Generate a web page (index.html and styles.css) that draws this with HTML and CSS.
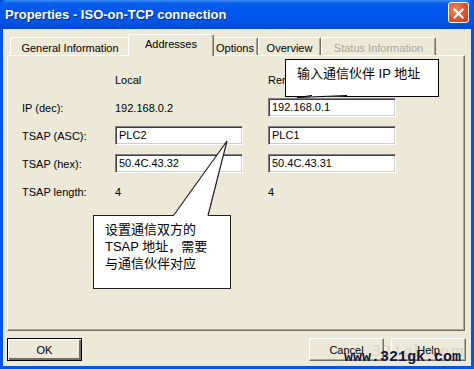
FILE: index.html
```html
<!DOCTYPE html>
<html lang="zh-CN">
<head>
    <meta charset="UTF-8">
    <title>Properties - ISO-on-TCP connection</title>
    <link rel="stylesheet" href="styles.css">
</head>
<body>
    <div class="window">
        <div class="titlebar">
            <span class="title">Properties - ISO-on-TCP connection</span>
            <span class="close">
                <svg width="21" height="21" viewBox="0 0 21 21">
                    <path d="M6 6 L15 15 M15 6 L6 15" stroke="#fff" stroke-width="2.2" stroke-linecap="square"/>
                </svg>
            </span>
        </div>

        <div class="body">
            <!-- Tabs -->
            <div class="tabs">
                <div class="tab tab-general">General Information</div>
                <div class="tab tab-addr selected">Addresses</div>
                <div class="tab tab-options">Options</div>
                <div class="tab tab-overview">Overview</div>
                <div class="tab tab-status disabled">Status Information</div>
            </div>

            <!-- Addresses page -->
            <div class="panel">
                <div class="addr-grid">
                    <span></span>
                    <span class="head">Local</span>
                    <span class="head">Remote</span>

                    <span class="label">IP (dec):</span>
                    <span class="value">192.168.0.2</span>
                    <span class="field">192.168.0.1</span>

                    <span class="label">TSAP (ASC):</span>
                    <span class="field">PLC2</span>
                    <span class="field">PLC1</span>

                    <span class="label">TSAP (hex):</span>
                    <span class="field">50.4C.43.32</span>
                    <span class="field">50.4C.43.31</span>

                    <span class="label">TSAP length:</span>
                    <span class="value">4</span>
                    <span class="value">4</span>
                </div>
            </div>

            <div class="buttons">
                <button class="btn default">OK</button>
                <div class="btn-group">
                    <button class="btn">Cancel</button>
                    <button class="btn">Help</button>
                </div>
            </div>
        </div>

        <!-- Callouts -->
        <div class="callout callout-ip">输入通信伙伴 IP 地址</div>
        <div class="callout callout-tsap">设置通信双方的<br>TSAP 地址，需要<br>与通信伙伴对应</div>
        <svg class="tails" width="474" height="369" viewBox="0 0 474 369">
            <polygon points="312,96 297,97.5 347,96" fill="#fff"/>
            <polyline points="312,95.5 297,97.5 347,95.5" fill="none" stroke="#000" stroke-width="1"/>
            <polygon points="173.5,216 227,141 208,216" fill="#fff"/>
            <polyline points="173.5,215.5 227,141 208,215.5" fill="none" stroke="#222" stroke-width="1.2"/>
        </svg>

        <div class="watermark-faint">321gk.com</div>
        <div class="watermark">www.321gk.com</div>
    </div>
</body>
</html>
```

FILE: styles.css
```css
body {
    margin: 0;
    font-family: "Liberation Sans", Arial, sans-serif;
    font-size: 11px;
    color: #000;
}

.window {
    position: relative;
    width: 474px;
    height: 369px;
    box-sizing: border-box;
    background-color: #0055e5;
    padding: 0 3px 3px 3px;
    display: flex;
    flex-direction: column;
    overflow: hidden;
}

.titlebar {
    height: 29px;
    margin: 0 -3px;
    padding: 0 5px 0 5px;
    display: flex;
    align-items: center;
    justify-content: space-between;
    background: linear-gradient(to bottom, #3d8ef7 0px, #0a5fea 3px, #0058ee 10px, #0055e6 22px, #0047d4 29px);
    border-radius: 7px 7px 0 0;
}

.title {
    color: #fff;
    font-weight: bold;
    font-size: 13px;
    text-shadow: 1px 1px 0 #0a2a8a;
    margin-top: -1px;
}

.close {
    width: 21px;
    height: 21px;
    box-sizing: border-box;
    border: 1px solid #fff;
    border-radius: 3px;
    background: radial-gradient(circle at 35% 35%, #f08a63, #e0522a 55%, #c13b16);
    margin-right: 0;
    margin-top: -4px;
    display: flex;
}

.body {
    flex: 1;
    background-color: #ece9d8;
    padding: 8px 6px 5px 4px;
    display: flex;
    flex-direction: column;
}

.tabs {
    display: flex;
    height: 18px;
    margin-left: 3px;
    position: relative;
    z-index: 1;
}

.tab {
    height: 18px;
    box-sizing: border-box;
    border-top: 1px solid #fff;
    border-left: 1px solid #fff;
    border-right: 1px solid #716f64;
    border-radius: 2px 2px 0 0;
    box-shadow: inset -1px 0 0 #aca899;
    text-align: center;
    line-height: 18px;
    padding-top: 1px;
    background-color: #ece9d8;
}

.tab-general { width: 120px; }
.tab-addr { width: 82px; }
.tab-options { width: 46px; }
.tab-overview { width: 63px; }
.tab-status { width: 115px; }

.tab.selected {
    height: 22px;
    margin: -3px -2px 0 -2px;
    width: 86px;
    line-height: 18px;
    padding-top: 0;
    position: relative;
    z-index: 2;
}

.tab.disabled {
    color: #aca899;
}

.panel {
    height: 276px;
    box-sizing: border-box;
    border-top: 1px solid #fff;
    border-left: 1px solid #fff;
    border-right: 1px solid #716f64;
    border-bottom: 1px solid #716f64;
    box-shadow: inset -1px -1px 0 #aca899;
    padding: 14px 0 0 14px;
}

.addr-grid {
    display: grid;
    grid-template-columns: 93px 153px 130px;
    grid-template-rows: repeat(5, 19px);
    row-gap: 9px;
    align-items: center;
}

.field {
    height: 19px;
    width: 128px;
    box-sizing: border-box;
    background-color: #fff;
    border-top: 1px solid #808080;
    border-left: 1px solid #808080;
    border-right: 1px solid #fff;
    border-bottom: 1px solid #fff;
    box-shadow: inset 1px 1px 0 #404040, inset -1px -1px 0 #d4d0c8;
    padding: 0 3px;
    line-height: 17px;
}

.buttons {
    margin-top: 7px;
    display: flex;
    justify-content: space-between;
}

.btn-group {
    display: flex;
    gap: 7px;
    margin-right: -1px;
}

.btn {
    width: 75px;
    height: 23px;
    box-sizing: border-box;
    font-family: "Liberation Sans", Arial, sans-serif;
    font-size: 11px;
    background-color: #ece9d8;
    border-top: 1px solid #fff;
    border-left: 1px solid #fff;
    border-right: 1px solid #716f64;
    border-bottom: 1px solid #716f64;
    box-shadow: inset -1px -1px 0 #aca899;
    padding: 0;
    color: #000;
}

.btn.default {
    border: 1px solid #000;
    box-shadow: inset 1px 1px 0 #fff, inset -2px -2px 0 #716f64;
}

.callout {
    position: absolute;
    background-color: #fff;
    border: 1px solid #000;
    box-sizing: border-box;
    font-family: "Liberation Sans", "Noto Sans CJK SC", sans-serif;
    font-size: 13px;
}

.callout-ip {
    left: 285px;
    top: 59px;
    width: 154px;
    height: 38px;
    padding: 5px 0 0 11px;
    line-height: 18px;
}

.callout-tsap {
    left: 93px;
    top: 215px;
    width: 138px;
    height: 74px;
    padding: 5px 0 0 11px;
    line-height: 17px;
    border-color: #222;
}

.tails {
    position: absolute;
    left: 0;
    top: 0;
    pointer-events: none;
}

.watermark {
    position: absolute;
    left: 344px;
    top: 349px;
    font-family: "Liberation Mono", "Courier New", monospace;
    font-weight: bold;
    font-size: 15px;
    line-height: 17px;
    color: #14143a;
}

.watermark-faint {
    position: absolute;
    left: 372px;
    top: 341px;
    font-family: "Liberation Serif", serif;
    font-size: 17px;
    letter-spacing: 2px;
    color: rgba(170, 165, 150, 0.35);
}
```
